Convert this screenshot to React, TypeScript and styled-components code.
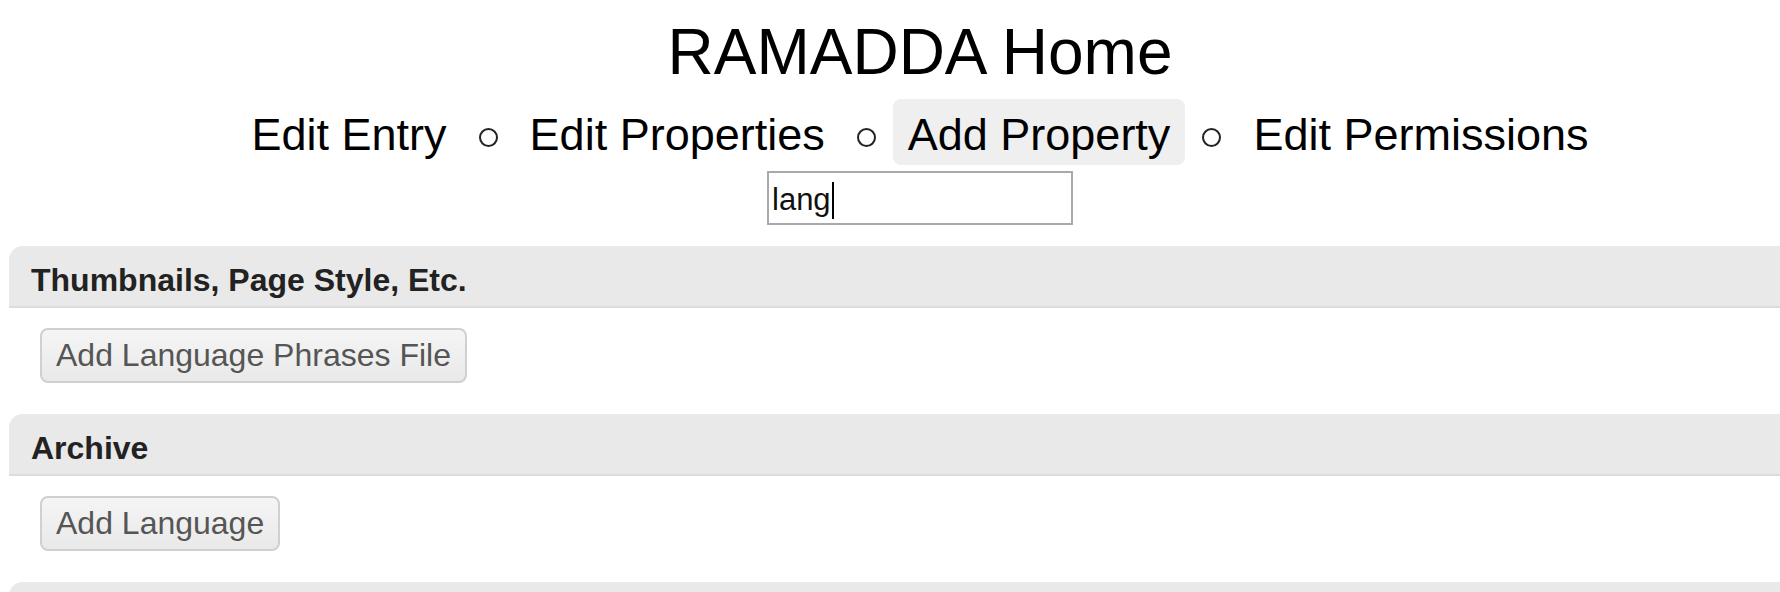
import styled, { createGlobalStyle } from 'styled-components';

const navItems = ['Edit Entry', 'Edit Properties', 'Add Property', 'Edit Permissions'];
const activeItem = 'Add Property';

const sections = [
  { title: 'Thumbnails, Page Style, Etc.', actions: ['Add Language Phrases File'] },
  { title: 'Archive', actions: ['Add Language'] },
  { title: '', actions: [] as string[] },
];

const GlobalStyle = createGlobalStyle`
  html, body {
    margin: 0;
    padding: 0;
    background: #fff;
    overflow: hidden;
  }
  * {
    box-sizing: border-box;
  }
  body {
    font-family: 'Liberation Sans', Helvetica, Arial, sans-serif;
    color: #000;
  }
`;

const App = () => {
  return (
    <>
      <GlobalStyle />
      <Page>
        <Masthead>
          <Title>RAMADDA Home</Title>
          <NavBar>
            {navItems.map((item, idx) => (
              <NavGroup key={item}>
                {idx > 0 && <Separator />}
                <NavLink href='#' $active={item === activeItem}>
                  {item}
                </NavLink>
              </NavGroup>
            ))}
          </NavBar>
          <SearchField>
            <span>lang</span>
            <Caret />
          </SearchField>
        </Masthead>
        {sections.map((section, idx) => (
          <Section key={idx}>
            <SectionHeader>{section.title}</SectionHeader>
            <SectionBody>
              {section.actions.map((action) => (
                <ActionButton key={action}>{action}</ActionButton>
              ))}
            </SectionBody>
          </Section>
        ))}
      </Page>
    </>
  );
};

const Page = styled.div`
  width: 1840px;
  padding: 0 9px;
`;

const Masthead = styled.header`
  display: flex;
  flex-direction: column;
  align-items: center;
  margin-bottom: 21px;
`;

const Title = styled.h1`
  margin: 0;
  padding-top: 17px;
  font-size: 64px;
  font-weight: 400;
  line-height: 71px;
`;

const NavBar = styled.nav`
  margin-top: 11px;
  display: flex;
  align-items: center;
`;

const NavGroup = styled.div`
  display: flex;
  align-items: center;
`;

const NavLink = styled.a<{ $active?: boolean }>`
  display: block;
  padding: 11px 15px 5px;
  font-size: 45px;
  line-height: 50px;
  color: #000;
  text-decoration: none;
  border-radius: 8px;
  background: ${({ $active }) => ($active ? '#efefef' : 'transparent')};
`;

const Separator = styled.span`
  width: 19px;
  height: 19px;
  margin: 10px 17px 0;
  border: 2px solid #222;
  border-radius: 50%;
`;

const SearchField = styled.div`
  margin-top: 6px;
  width: 306px;
  height: 54px;
  padding: 4px 3px 0;
  border: 2px solid #a9a9a9;
  display: flex;
  align-items: center;
  font-size: 31px;
  color: #111;
`;

const Caret = styled.span`
  width: 2px;
  height: 37px;
  margin-left: 1px;
  background: #000;
`;

const Section = styled.section``;

const SectionHeader = styled.div`
  min-height: 62px;
  padding: 15px 22px 7px;
  font-size: 32px;
  font-weight: 700;
  line-height: 38px;
  color: #222;
  background: #e9e9e9;
  border-bottom: 2px solid #dcdcdc;
  border-top-left-radius: 14px;
  border-top-right-radius: 14px;
`;

const SectionBody = styled.div`
  padding: 20px 0 31px 31px;
  display: flex;
  gap: 10px;
`;

const ActionButton = styled.button`
  padding: 7px 14px;
  font-family: 'Liberation Sans', Helvetica, Arial, sans-serif;
  font-size: 32px;
  line-height: 37px;
  color: #555;
  background: linear-gradient(#f5f5f5, #e9e9e9);
  border: 2px solid #d0d0d0;
  border-radius: 8px;
  cursor: pointer;
`;

export default App;
